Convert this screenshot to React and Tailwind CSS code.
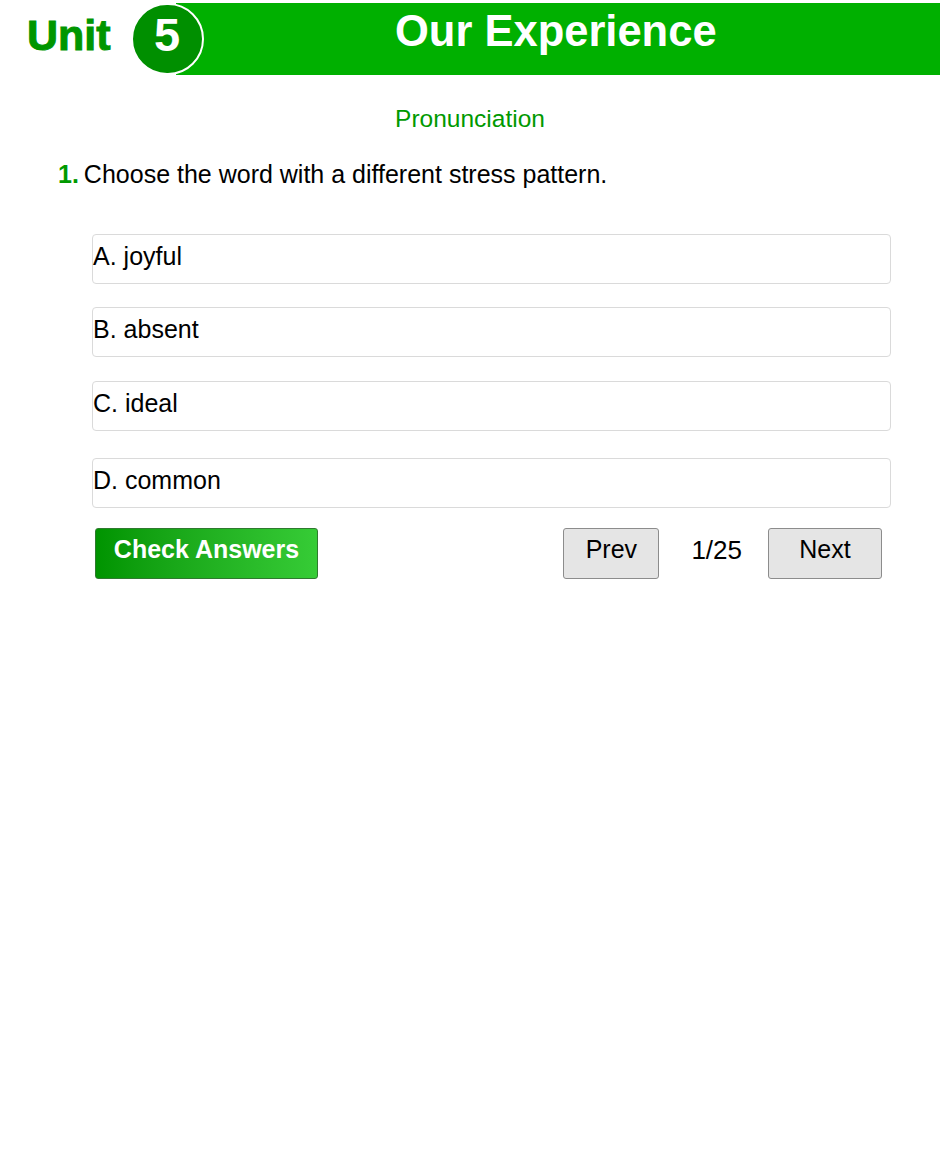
import { useState } from "react";

const options = [
  { id: "A", text: "joyful", gap: "mt-0" },
  { id: "B", text: "absent", gap: "mt-[23px]" },
  { id: "C", text: "ideal", gap: "mt-[24px]" },
  { id: "D", text: "common", gap: "mt-[27px]" }
];

export default function App() {
  const [selected, setSelected] = useState(null);

  return (
    <main className="min-h-screen bg-white font-['Liberation_Sans',Arial,sans-serif] text-black">
      {/* unit banner */}
      <header className="mt-[3px] flex h-[72px] items-start">
        <span className="pl-[27px] pt-[11px] text-[43px] font-bold leading-none text-[#009600] [-webkit-text-stroke:1px_#009600]">
          Unit
        </span>
        <div className="relative z-10 ml-[20px] flex h-[72px] w-[73px] shrink-0 justify-center rounded-full border-2 border-white bg-[#008f00] pt-[6px]">
          <span className="text-[47px] font-bold leading-none text-white">5</span>
        </div>
        <div className="-ml-[28px] flex h-[72px] flex-1 justify-center bg-[#00b000] pr-[4px] pt-[7px]">
          <h1 className="text-[43.5px] font-bold leading-none text-white">Our Experience</h1>
        </div>
      </header>

      <p className="mt-[32px] text-center text-[24.5px] leading-none text-[#009900]">Pronunciation</p>

      <p className="mt-[30px] flex pl-[58px] text-[25px] leading-none">
        <span className="mr-[5px] font-bold text-[#009900]">1.</span>
        <span>Choose the word with a different stress pattern.</span>
      </p>

      <div className="mt-[47px] pl-[92px] pr-[49px]">
        {options.map((opt) => (
          <div
            key={opt.id}
            onClick={() => setSelected(opt.id)}
            className={`${opt.gap} h-[50px] cursor-pointer rounded-[4px] border pt-[9px] text-[25px] leading-none ${
              selected === opt.id ? "border-[#00b000] bg-[#f0fff0]" : "border-[#dadada] bg-white"
            }`}
          >
            {opt.id}. {opt.text}
          </div>
        ))}

        <div className="mt-[20px] flex items-start pr-[9px]">
          <button className="ml-[3px] h-[51px] w-[223px] rounded-[3px] border border-[#2f7a2f] bg-gradient-to-r from-[#009400] to-[#36cc36] pb-[7px] text-[25px] font-bold leading-none text-white">
            Check Answers
          </button>
          <div className="ml-auto flex items-start">
            <button className="h-[51px] w-[96px] rounded-[3px] border border-[#8c8c8c] bg-[#e5e5e5] pb-[7px] text-[25px] leading-none text-black">
              Prev
            </button>
            <span className="ml-[32px] mr-[26px] pt-[9px] text-[26px] leading-none">1/25</span>
            <button className="h-[51px] w-[114px] rounded-[3px] border border-[#8c8c8c] bg-[#e5e5e5] pb-[7px] text-[25px] leading-none text-black">
              Next
            </button>
          </div>
        </div>
      </div>
    </main>
  );
}
